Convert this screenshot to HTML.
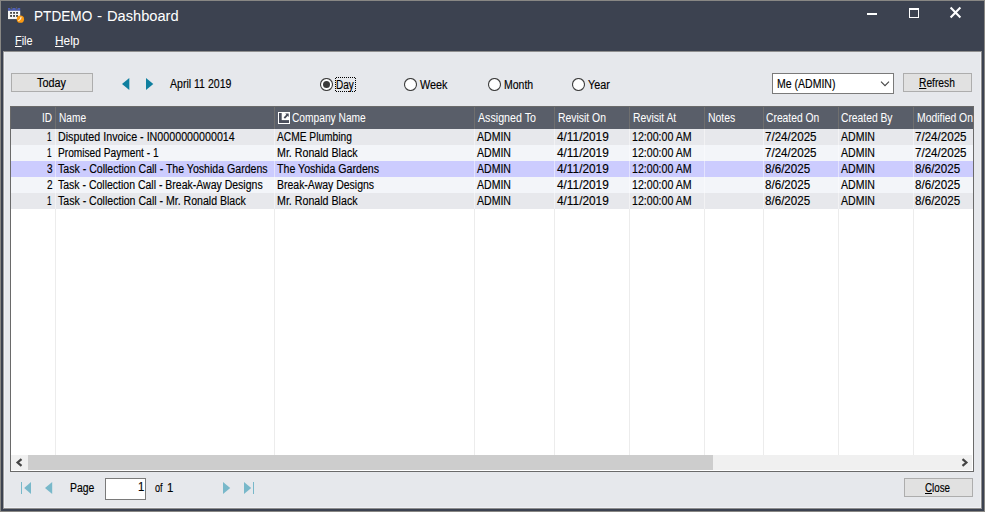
<!DOCTYPE html>
<html><head><meta charset="utf-8"><title>PTDEMO - Dashboard</title>
<style>
html,body{margin:0;padding:0}
body{width:985px;height:512px;overflow:hidden;position:relative;background:#3c4250;font-family:"Liberation Sans", sans-serif}
div,span,svg{box-sizing:border-box}
.t{position:absolute;white-space:pre;transform-origin:0 0;display:block;-webkit-text-stroke:0.15px currentColor}
.w{-webkit-text-stroke:0.04px currentColor}
.t u{text-decoration:underline;text-underline-offset:1px}
.abs{position:absolute}
.btn{position:absolute;background:#e1e1e1;border:1px solid #adadad}
</style></head><body>
<!-- window frame -->
<div class="abs" style="left:0;top:0;width:985px;height:512px;border:1px solid #888784"></div>
<!-- app icon -->
<svg class="abs" style="left:7px;top:6px" width="20" height="19" viewBox="0 0 20 19">
 <rect x="1" y="3.300" width="12.200" height="1.500" fill="#5060b8"/>
 <rect x="1" y="2" width="2.300" height="1.600" fill="#5060b8"/><rect x="5.400" y="2" width="3.200" height="1.600" fill="#5060b8"/><rect x="10.600" y="2" width="2.600" height="1.600" fill="#5060b8"/>
 <rect x="3.900" y="1" width="0.900" height="2.200" fill="#5d5d5d"/><rect x="9.100" y="1" width="0.900" height="2.200" fill="#5d5d5d"/>
 <rect x="1" y="4.800" width="12.200" height="8.300" fill="#f6f6f6"/>
 <g fill="#474747"><rect x="3.100" y="6" width="1.900" height="1.800"/><rect x="6.100" y="6" width="1.900" height="1.800"/><rect x="9.100" y="6" width="1.900" height="1.800"/><rect x="3.100" y="9" width="1.900" height="1.900"/><rect x="6.100" y="9" width="1.900" height="1.900"/><rect x="9.100" y="9" width="1.900" height="1.900"/></g>
 <circle cx="13.400" cy="13.200" r="3.650" fill="#fb9a12"/>
 <path d="M14 11.200L13.500 13.300L11.700 14.500" stroke="#fff" stroke-width="1" fill="none" stroke-linecap="round"/>
</svg>
<!-- caption buttons -->
<div class="abs" style="left:867px;top:13px;width:10px;height:2px;background:#fff"></div>
<div class="abs" style="left:909px;top:8px;width:10px;height:10px;border:1px solid #fff;border-top-width:2px"></div>
<svg class="abs" style="left:949px;top:6px" width="13" height="13" viewBox="0 0 13 13"><path d="M1.6 1.6L11.4 11.4M11.4 1.6L1.6 11.4" stroke="#fff" stroke-width="2.1" fill="none"/></svg>
<!-- client area -->
<div class="abs" style="left:3px;top:51px;width:979px;height:458px;background:#e6e8ec;border:1px solid #8f8f8f;border-left-color:#a0a0a0"></div>
<div class="abs" style="left:4px;top:52px;width:977px;height:456px;border:1px solid #eff0f6;border-top:0"></div>
<!-- toolbar -->
<div class="btn" style="left:11px;top:73px;width:82px;height:19px"></div>
<svg class="abs" style="left:121px;top:77px" width="34" height="14" viewBox="0 0 34 14"><path d="M8.3 1v12L1 7z" fill="#0f7f9f"/><path d="M25 1v12l7.3-6z" fill="#0f7f9f"/></svg>
<svg style="position:absolute;left:320px;top:78px" width="13" height="13" viewBox="0 0 13 13"><circle cx="6.5" cy="6.5" r="6" fill="#fff" stroke="#404040" stroke-width="1.1"/><circle cx="6.5" cy="6.5" r="3.5" fill="#3a3a3a"/></svg><svg style="position:absolute;left:404px;top:78px" width="13" height="13" viewBox="0 0 13 13"><circle cx="6.5" cy="6.5" r="6" fill="#fff" stroke="#404040" stroke-width="1.1"/></svg><svg style="position:absolute;left:488px;top:78px" width="13" height="13" viewBox="0 0 13 13"><circle cx="6.5" cy="6.5" r="6" fill="#fff" stroke="#404040" stroke-width="1.1"/></svg><svg style="position:absolute;left:572px;top:78px" width="13" height="13" viewBox="0 0 13 13"><circle cx="6.5" cy="6.5" r="6" fill="#fff" stroke="#404040" stroke-width="1.1"/></svg>
<svg class="abs" style="left:335px;top:77px" width="21" height="15" viewBox="0 0 21 15" shape-rendering="crispEdges"><path d="M1 .5H20M20.500 1V14M20 14.500H1M.5 14V1" stroke="#000" stroke-width="1" stroke-dasharray="1 1" fill="none"/></svg>
<div class="abs" style="left:772px;top:73px;width:122px;height:21px;background:#fff;border:1px solid #7a7a7a"></div>
<svg class="abs" style="left:879px;top:80px" width="12" height="8" viewBox="0 0 12 8"><path d="M2 1.700L6 5.700L10 1.700" stroke="#444" stroke-width="1.1" fill="none"/></svg>
<div class="btn" style="left:903px;top:73px;width:69px;height:19px"></div>
<!-- grid -->
<div class="abs" style="left:10px;top:106px;width:964px;height:366px;background:#fff;border:1px solid #6a6a6a"></div>
<div class="abs" style="left:11px;top:107px;width:962px;height:22px;background:#595e69"></div>
<div style="position:absolute;left:11px;top:129px;width:962px;height:16px;background:#e7e8ec"></div><div style="position:absolute;left:11px;top:145px;width:962px;height:16px;background:#f3f5f9"></div><div style="position:absolute;left:11px;top:161px;width:962px;height:16px;background:#ccccfe"></div><div style="position:absolute;left:11px;top:177px;width:962px;height:16px;background:#f3f5f9"></div><div style="position:absolute;left:11px;top:193px;width:962px;height:16px;background:#e7e8ec"></div>
<div style="position:absolute;left:55px;top:107px;width:1px;height:22px;background:#6f6f6f"></div><div style="position:absolute;left:274px;top:107px;width:1px;height:22px;background:#6f6f6f"></div><div style="position:absolute;left:474px;top:107px;width:1px;height:22px;background:#6f6f6f"></div><div style="position:absolute;left:554px;top:107px;width:1px;height:22px;background:#6f6f6f"></div><div style="position:absolute;left:629px;top:107px;width:1px;height:22px;background:#6f6f6f"></div><div style="position:absolute;left:704px;top:107px;width:1px;height:22px;background:#6f6f6f"></div><div style="position:absolute;left:763px;top:107px;width:1px;height:22px;background:#6f6f6f"></div><div style="position:absolute;left:838px;top:107px;width:1px;height:22px;background:#6f6f6f"></div><div style="position:absolute;left:913px;top:107px;width:1px;height:22px;background:#6f6f6f"></div>
<div style="position:absolute;left:55px;top:129px;width:1px;height:80px;background:rgba(255,255,255,.45)"></div><div style="position:absolute;left:274px;top:129px;width:1px;height:80px;background:rgba(255,255,255,.45)"></div><div style="position:absolute;left:474px;top:129px;width:1px;height:80px;background:rgba(255,255,255,.45)"></div><div style="position:absolute;left:554px;top:129px;width:1px;height:80px;background:rgba(255,255,255,.45)"></div><div style="position:absolute;left:629px;top:129px;width:1px;height:80px;background:rgba(255,255,255,.45)"></div><div style="position:absolute;left:704px;top:129px;width:1px;height:80px;background:rgba(255,255,255,.45)"></div><div style="position:absolute;left:763px;top:129px;width:1px;height:80px;background:rgba(255,255,255,.45)"></div><div style="position:absolute;left:838px;top:129px;width:1px;height:80px;background:rgba(255,255,255,.45)"></div><div style="position:absolute;left:913px;top:129px;width:1px;height:80px;background:rgba(255,255,255,.45)"></div>
<div style="position:absolute;left:55px;top:209px;width:1px;height:246px;background:#ececec"></div><div style="position:absolute;left:274px;top:209px;width:1px;height:246px;background:#ececec"></div><div style="position:absolute;left:474px;top:209px;width:1px;height:246px;background:#ececec"></div><div style="position:absolute;left:554px;top:209px;width:1px;height:246px;background:#ececec"></div><div style="position:absolute;left:629px;top:209px;width:1px;height:246px;background:#ececec"></div><div style="position:absolute;left:704px;top:209px;width:1px;height:246px;background:#ececec"></div><div style="position:absolute;left:763px;top:209px;width:1px;height:246px;background:#ececec"></div><div style="position:absolute;left:838px;top:209px;width:1px;height:246px;background:#ececec"></div><div style="position:absolute;left:913px;top:209px;width:1px;height:246px;background:#ececec"></div>
<!-- company header icon -->
<svg class="abs" style="left:278px;top:112px" width="12" height="12" viewBox="0 0 12 12"><rect x="0.5" y="0.5" width="11" height="11" fill="#4a4e5b" stroke="#fff"/><rect x="3.700" y="1" width="7.300" height="7.100" fill="#fff"/><path d="M6.300 6.100L9.600 2.700" stroke="#474b58" stroke-width="1.900"/><path d="M7.200 1.500h3.500v3.500z" fill="#474b58"/></svg>
<!-- h scrollbar -->
<div class="abs" style="left:11px;top:455px;width:961px;height:15px;background:#f0f0f0"></div>
<div class="abs" style="left:28px;top:455px;width:685px;height:15px;background:#cdcdcd"></div>
<svg class="abs" style="left:15px;top:457px" width="9" height="11" viewBox="0 0 9 11"><path d="M6.500 2.200L2.600 5.500L6.500 8.800" stroke="#444" stroke-width="2.200" fill="none"/></svg>
<svg class="abs" style="left:960px;top:457px" width="9" height="11" viewBox="0 0 9 11"><path d="M2.500 2.200L6.400 5.500L2.500 8.800" stroke="#444" stroke-width="2.200" fill="none"/></svg>
<!-- footer -->
<svg class="abs" style="left:20px;top:481px" width="36" height="14" viewBox="0 0 36 14"><g fill="#78b8ca"><rect x="1" y="1" width="1" height="12"/><path d="M11 1v12L4.200 7z"/><path d="M32.200 1v12L25 7z"/></g></svg>
<svg class="abs" style="left:221px;top:481px" width="36" height="14" viewBox="0 0 36 14"><g fill="#78b8ca"><path d="M2 1v12l7.200-6z"/><path d="M23 1v12l7.200-6z"/><rect x="32" y="1" width="1" height="12"/></g></svg>
<div class="abs" style="left:105px;top:478px;width:41px;height:22px;background:#fff;border:1px solid #7a7a7a"></div>
<div class="btn" style="left:904px;top:478px;width:69px;height:19px"></div>
<span class="t w" style="left:33.9px;top:6.2px;font-size:15.5px;line-height:20px;color:#fff;transform:scaleX(0.878)">PTDEMO</span>
<span class="t w" style="left:97.4px;top:6.2px;font-size:15.5px;line-height:20px;color:#fff;transform:scaleX(0.986)">-</span>
<span class="t w" style="left:107.3px;top:6.2px;font-size:15.5px;line-height:20px;color:#fff;transform:scaleX(0.944)">Dashboard</span>
<span class="t w" style="left:14.7px;top:32.8px;font-size:12px;line-height:16px;color:#fff;transform:scaleX(0.910)"><u>F</u>ile</span>
<span class="t w" style="left:54.7px;top:32.8px;font-size:12px;line-height:16px;color:#fff;transform:scaleX(0.988)"><u>H</u>elp</span>
<span class="t" style="left:37.0px;top:75.0px;font-size:12px;line-height:16px;color:#000;transform:scaleX(0.905)">Today</span>
<span class="t" style="left:169.6px;top:76.0px;font-size:12px;line-height:16px;color:#000;transform:scaleX(0.879)">April 11 2019</span>
<span class="t" style="left:336.4px;top:76.6px;font-size:12px;line-height:16px;color:#000;transform:scaleX(0.834)">Day</span>
<span class="t" style="left:419.9px;top:76.6px;font-size:12px;line-height:16px;color:#000;transform:scaleX(0.903)">Week</span>
<span class="t" style="left:504.3px;top:76.6px;font-size:12px;line-height:16px;color:#000;transform:scaleX(0.875)">Month</span>
<span class="t" style="left:588.1px;top:76.6px;font-size:12px;line-height:16px;color:#000;transform:scaleX(0.899)">Year</span>
<span class="t" style="left:777.0px;top:75.8px;font-size:12px;line-height:16px;color:#000;transform:scaleX(0.876)">Me (ADMIN)</span>
<span class="t" style="left:918.8px;top:74.6px;font-size:12px;line-height:16px;color:#000;transform:scaleX(0.854)"><u>R</u>efresh</span>
<span class="t w" style="left:41.6px;top:109.6px;font-size:12px;line-height:16px;color:#fff;transform:scaleX(0.842)">ID</span>
<span class="t w" style="left:58.6px;top:109.6px;font-size:12px;line-height:16px;color:#fff;transform:scaleX(0.846)">Name</span>
<span class="t w" style="left:291.7px;top:109.6px;font-size:12px;line-height:16px;color:#fff;transform:scaleX(0.851)">Company Name</span>
<span class="t w" style="left:477.5px;top:109.6px;font-size:12px;line-height:16px;color:#fff;transform:scaleX(0.889)">Assigned To</span>
<span class="t w" style="left:557.7px;top:109.6px;font-size:12px;line-height:16px;color:#fff;transform:scaleX(0.867)">Revisit On</span>
<span class="t w" style="left:633.1px;top:109.6px;font-size:12px;line-height:16px;color:#fff;transform:scaleX(0.864)">Revisit At</span>
<span class="t w" style="left:708.1px;top:109.6px;font-size:12px;line-height:16px;color:#fff;transform:scaleX(0.871)">Notes</span>
<span class="t w" style="left:766.1px;top:109.6px;font-size:12px;line-height:16px;color:#fff;transform:scaleX(0.859)">Created On</span>
<span class="t w" style="left:841.0px;top:109.6px;font-size:12px;line-height:16px;color:#fff;transform:scaleX(0.858)">Created By</span>
<span class="t w" style="left:916.6px;top:109.6px;font-size:12px;line-height:16px;color:#fff;transform:scaleX(0.865)">Modified On</span>
<span class="t" style="left:46.8px;top:128.7px;font-size:12px;line-height:16px;color:#000;transform:scaleX(0.688)">1</span>
<span class="t" style="left:57.8px;top:128.7px;font-size:12px;line-height:16px;color:#000;transform:scaleX(0.892)">Disputed Invoice - IN0000000000014</span>
<span class="t" style="left:276.5px;top:128.7px;font-size:12px;line-height:16px;color:#000;transform:scaleX(0.851)">ACME Plumbing</span>
<span class="t" style="left:476.6px;top:128.7px;font-size:12px;line-height:16px;color:#000;transform:scaleX(0.879)">ADMIN</span>
<span class="t" style="left:556.5px;top:128.7px;font-size:12px;line-height:16px;color:#000;transform:scaleX(0.985)">4/11/2019</span>
<span class="t" style="left:631.8px;top:128.7px;font-size:12px;line-height:16px;color:#000;transform:scaleX(0.886)">12:00:00 AM</span>
<span class="t" style="left:765.4px;top:128.7px;font-size:12px;line-height:16px;color:#000;transform:scaleX(0.965)">7/24/2025</span>
<span class="t" style="left:840.5px;top:128.7px;font-size:12px;line-height:16px;color:#000;transform:scaleX(0.879)">ADMIN</span>
<span class="t" style="left:915.4px;top:128.7px;font-size:12px;line-height:16px;color:#000;transform:scaleX(0.965)">7/24/2025</span>
<span class="t" style="left:46.8px;top:144.7px;font-size:12px;line-height:16px;color:#000;transform:scaleX(0.688)">1</span>
<span class="t" style="left:57.8px;top:144.7px;font-size:12px;line-height:16px;color:#000;transform:scaleX(0.847)">Promised Payment - 1</span>
<span class="t" style="left:276.5px;top:144.7px;font-size:12px;line-height:16px;color:#000;transform:scaleX(0.888)">Mr. Ronald Black</span>
<span class="t" style="left:476.6px;top:144.7px;font-size:12px;line-height:16px;color:#000;transform:scaleX(0.879)">ADMIN</span>
<span class="t" style="left:556.5px;top:144.7px;font-size:12px;line-height:16px;color:#000;transform:scaleX(0.985)">4/11/2019</span>
<span class="t" style="left:631.8px;top:144.7px;font-size:12px;line-height:16px;color:#000;transform:scaleX(0.886)">12:00:00 AM</span>
<span class="t" style="left:765.4px;top:144.7px;font-size:12px;line-height:16px;color:#000;transform:scaleX(0.965)">7/24/2025</span>
<span class="t" style="left:840.5px;top:144.7px;font-size:12px;line-height:16px;color:#000;transform:scaleX(0.879)">ADMIN</span>
<span class="t" style="left:915.4px;top:144.7px;font-size:12px;line-height:16px;color:#000;transform:scaleX(0.965)">7/24/2025</span>
<span class="t" style="left:46.8px;top:160.7px;font-size:12px;line-height:16px;color:#000;transform:scaleX(0.837)">3</span>
<span class="t" style="left:57.8px;top:160.7px;font-size:12px;line-height:16px;color:#000;transform:scaleX(0.881)">Task - Collection Call - The Yoshida Gardens</span>
<span class="t" style="left:276.5px;top:160.7px;font-size:12px;line-height:16px;color:#000;transform:scaleX(0.884)">The Yoshida Gardens</span>
<span class="t" style="left:476.6px;top:160.7px;font-size:12px;line-height:16px;color:#000;transform:scaleX(0.879)">ADMIN</span>
<span class="t" style="left:556.5px;top:160.7px;font-size:12px;line-height:16px;color:#000;transform:scaleX(0.985)">4/11/2019</span>
<span class="t" style="left:631.8px;top:160.7px;font-size:12px;line-height:16px;color:#000;transform:scaleX(0.886)">12:00:00 AM</span>
<span class="t" style="left:765.4px;top:160.7px;font-size:12px;line-height:16px;color:#000;transform:scaleX(0.967)">8/6/2025</span>
<span class="t" style="left:840.5px;top:160.7px;font-size:12px;line-height:16px;color:#000;transform:scaleX(0.879)">ADMIN</span>
<span class="t" style="left:915.4px;top:160.7px;font-size:12px;line-height:16px;color:#000;transform:scaleX(0.967)">8/6/2025</span>
<span class="t" style="left:46.8px;top:176.7px;font-size:12px;line-height:16px;color:#000;transform:scaleX(0.837)">2</span>
<span class="t" style="left:57.8px;top:176.7px;font-size:12px;line-height:16px;color:#000;transform:scaleX(0.875)">Task - Collection Call - Break-Away Designs</span>
<span class="t" style="left:276.5px;top:176.7px;font-size:12px;line-height:16px;color:#000;transform:scaleX(0.873)">Break-Away Designs</span>
<span class="t" style="left:476.6px;top:176.7px;font-size:12px;line-height:16px;color:#000;transform:scaleX(0.879)">ADMIN</span>
<span class="t" style="left:556.5px;top:176.7px;font-size:12px;line-height:16px;color:#000;transform:scaleX(0.985)">4/11/2019</span>
<span class="t" style="left:631.8px;top:176.7px;font-size:12px;line-height:16px;color:#000;transform:scaleX(0.886)">12:00:00 AM</span>
<span class="t" style="left:765.4px;top:176.7px;font-size:12px;line-height:16px;color:#000;transform:scaleX(0.967)">8/6/2025</span>
<span class="t" style="left:840.5px;top:176.7px;font-size:12px;line-height:16px;color:#000;transform:scaleX(0.879)">ADMIN</span>
<span class="t" style="left:915.4px;top:176.7px;font-size:12px;line-height:16px;color:#000;transform:scaleX(0.967)">8/6/2025</span>
<span class="t" style="left:46.8px;top:192.7px;font-size:12px;line-height:16px;color:#000;transform:scaleX(0.688)">1</span>
<span class="t" style="left:57.8px;top:192.7px;font-size:12px;line-height:16px;color:#000;transform:scaleX(0.880)">Task - Collection Call - Mr. Ronald Black</span>
<span class="t" style="left:276.5px;top:192.7px;font-size:12px;line-height:16px;color:#000;transform:scaleX(0.888)">Mr. Ronald Black</span>
<span class="t" style="left:476.6px;top:192.7px;font-size:12px;line-height:16px;color:#000;transform:scaleX(0.879)">ADMIN</span>
<span class="t" style="left:556.5px;top:192.7px;font-size:12px;line-height:16px;color:#000;transform:scaleX(0.985)">4/11/2019</span>
<span class="t" style="left:631.8px;top:192.7px;font-size:12px;line-height:16px;color:#000;transform:scaleX(0.886)">12:00:00 AM</span>
<span class="t" style="left:765.4px;top:192.7px;font-size:12px;line-height:16px;color:#000;transform:scaleX(0.967)">8/6/2025</span>
<span class="t" style="left:840.5px;top:192.7px;font-size:12px;line-height:16px;color:#000;transform:scaleX(0.879)">ADMIN</span>
<span class="t" style="left:915.4px;top:192.7px;font-size:12px;line-height:16px;color:#000;transform:scaleX(0.967)">8/6/2025</span>
<span class="t" style="left:69.6px;top:480.2px;font-size:12px;line-height:16px;color:#000;transform:scaleX(0.870)">Page</span>
<span class="t" style="left:137.7px;top:478.8px;font-size:12px;line-height:16px;color:#000;transform:scaleX(0.950)">1</span>
<span class="t" style="left:154.8px;top:480.2px;font-size:12px;line-height:16px;color:#000;transform:scaleX(0.759)">of</span>
<span class="t" style="left:167.1px;top:480.2px;font-size:12px;line-height:16px;color:#000;transform:scaleX(0.950)">1</span>
<span class="t" style="left:924.7px;top:479.7px;font-size:12px;line-height:16px;color:#000;transform:scaleX(0.815)"><u>C</u>lose</span>
</body></html>
